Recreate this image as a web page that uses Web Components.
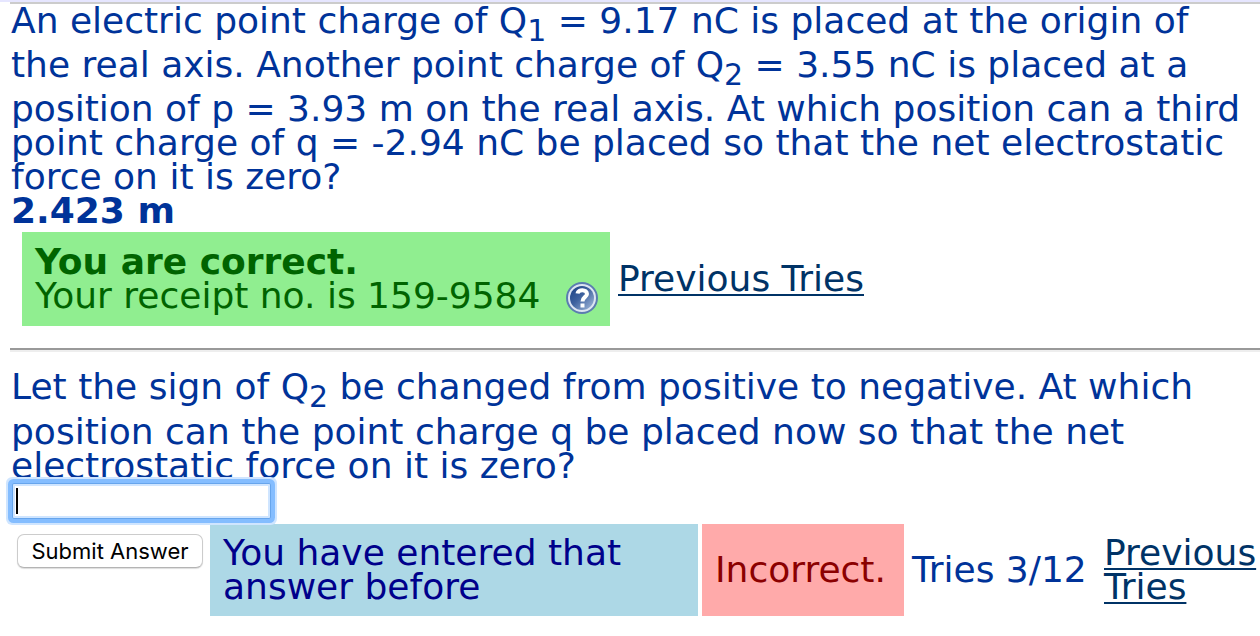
<!DOCTYPE html>
<html lang="en">
<head>
<meta charset="utf-8">
<title>Point charge problem</title>
<style>
body { margin: 0; background: #fff; }
</style>
</head>
<body>
<homework-page></homework-page>

<template id="page-template">
  <style>
    :host {
      display: block;
      font: 36px/34px Verdana, "DejaVu Sans", sans-serif;
      color: #003399;
      overflow-x: clip;
    }
    header { height: 2px; background: #e6e6ff; }
    main { margin-left: 10px; border-top: 2px solid #ccc; }
    p { margin: 0; padding-left: 1px; white-space: nowrap; }
    .answer { font-weight: bold; }
    .row { display: flex; align-items: center; gap: 4px; }
    .solved { padding: 4px 12px 22px; gap: 8px; }
    .receipt { flex: 0 1 588px; }
    .line { display: flex; justify-content: space-between; }
    hr { margin: 0 0 18px; border: 0; border-top: 2px solid #999; border-bottom: 2px solid #eee; }
    .tries { flex: 0 0 188px; margin: 0 0 0 4px; white-space: nowrap; }
    .entry { padding: 4px 0 0 7px; }
    submit-button { align-self: flex-start; margin: 10px 3px 0 0; }
    .repeat { flex: 0 0 488px; }
    .wrong { flex: 0 0 202px; }
    .wrap { flex: 0 0 152px; }
  </style>
  <header></header>
  <main>
    <p>An electric point charge of Q<sub-script>1</sub-script> = 9.17 nC is placed at the origin of<br>
    the real axis. Another point charge of Q<sub-script>2</sub-script> = 3.55 nC is placed at a<br>
    position of p = 3.93 m on the real axis. At which position can a third<br>
    point charge of q = -2.94 nC be placed so that the net electrostatic<br>
    force on it is zero?</p>
    <p class="answer">2.423 m</p>
    <div class="row solved">
      <status-box class="receipt" kind="correct"><b>You are correct.</b><div class="line"><span>Your receipt no. is 159-9584</span><help-icon></help-icon></div></status-box>
      <tries-link>Previous Tries</tries-link>
    </div>
    <hr>
    <p>Let the sign of Q<sub-script>2</sub-script> be changed from positive to negative. At which<br>
    position can the point charge q be placed now so that the net<br>
    electrostatic force on it is zero?</p>
    <answer-field></answer-field>
    <div class="row entry">
      <submit-button>Submit Answer</submit-button>
      <status-box class="repeat" kind="repeat">You have entered that<br>answer before</status-box>
      <status-box class="wrong" kind="wrong">Incorrect.</status-box>
      <span class="tries">Tries 3/12</span>
      <tries-link class="wrap">Previous<br>Tries</tries-link>
    </div>
  </main>
</template>

<script>
const define = (name, markup) => customElements.define(name, class extends HTMLElement {
  constructor() {
    super();
    this.attachShadow({ mode: "open" }).innerHTML = markup.trim();
  }
});

define("sub-script", `<style>:host { display: inline; } sub { font-size: 30px; }</style><sub><slot></slot></sub>`);

define("status-box", `
  <style>
    :host { display: flex; align-items: center; box-sizing: border-box; min-height: 92px; padding: 12px; white-space: nowrap; }
    :host([kind="correct"]) { min-height: 94px; background: #90ee90; color: #006400; }
    :host([kind="repeat"]) { background: #add8e6; color: #00008b; }
    :host([kind="wrong"]) { background: #ffaaaa; color: #8b0000; }
    div { flex: 1; padding-left: 1px; }
  </style>
  <div><slot></slot></div>`);

define("tries-link", `
  <style>
    :host { display: block; white-space: nowrap; }
    a { color: #003366; text-decoration: underline; text-decoration-thickness: 2px; text-underline-offset: 3px; text-decoration-skip-ink: none; }
  </style>
  <a href="#tries"><slot></slot></a>`);

define("help-icon", `
  <style>
    :host { display: block; width: 32px; height: 32px; margin: 3px 0 -1px; }
    svg { display: block; width: 100%; height: 100%; }
  </style>
  <svg viewBox="0 0 32 32" role="img" aria-label="Help">
    <defs>
      <linearGradient id="disc" x1="0" y1="0" x2="1" y2="1">
        <stop offset="0" stop-color="#183f83"/><stop offset=".45" stop-color="#3f629f"/><stop offset="1" stop-color="#a9bfdf"/>
      </linearGradient>
    </defs>
    <circle cx="16" cy="16" r="15" fill="#dde5f2" stroke="#5b7db0" stroke-width="2"/>
    <circle cx="16" cy="16" r="12" fill="url(#disc)"/>
    <path d="M11.5 11.5C12 7 21 7 21 12C21 15 16.500 15 16.500 19.500" fill="none" stroke="#fff" stroke-width="4"/>
    <rect x="14.500" y="21.500" width="4" height="4" fill="#fff"/>
  </svg>`);

define("answer-field", `
  <style>
    :host { display: block; height: 37px; }
    label { display: block; position: relative; }
    input {
      display: block; box-sizing: border-box; width: 259px; height: 36px; margin-left: 2px; padding: 0 3px;
      border: 1px solid #67a5ec; border-radius: 2px; outline: 0; background: #fff; color: #000; font: inherit;
      box-shadow: 0 0 0 4px #84bdff, 0 0 0 6px #cfe5ff, inset 0 0 0 2px #cfe5ff;
    }
    i { position: absolute; left: 6px; top: 5px; width: 2px; height: 26px; background: #000; }
  </style>
  <label><input type="text" aria-label="Answer"><i></i></label>`);

define("submit-button", `
  <style>
    :host { display: block; }
    button {
      display: block; box-sizing: border-box; width: 186px; height: 34px; padding: 0; border: 1px solid #ccc;
      border-bottom-color: #b4b4b4; border-radius: 7px; background: #fff; color: #000; white-space: nowrap;
      font: 22px/32px Inter, sans-serif; box-shadow: 0 1px 1px #ddd;
    }
  </style>
  <button type="submit"><slot></slot></button>`);

customElements.define("homework-page", class extends HTMLElement {
  constructor() {
    super();
    this.attachShadow({ mode: "open" }).append(document.getElementById("page-template").content.cloneNode(true));
  }
});
</script>
</body>
</html>
